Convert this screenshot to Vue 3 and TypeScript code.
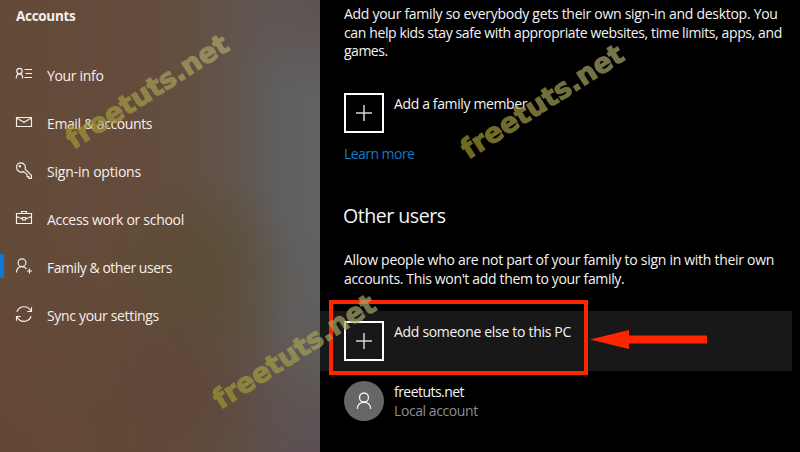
<script setup lang="ts">
interface NavItem {
  id: string
  label: string
  active?: boolean
}

const navItems: NavItem[] = [
  { id: 'info', label: 'Your info' },
  { id: 'email', label: 'Email & accounts' },
  { id: 'signin', label: 'Sign-in options' },
  { id: 'work', label: 'Access work or school' },
  { id: 'family', label: 'Family & other users', active: true },
  { id: 'sync', label: 'Sync your settings' },
]

const watermarks: string[] = ['wm-one', 'wm-two', 'wm-three']
</script>

<template>
  <div class="window">
    <aside class="sidebar">
      <h2 class="sidebar-title">Accounts</h2>
      <nav class="nav">
        <a v-for="item in navItems" :key="item.id" class="nav-item" :class="[item.id, { active: item.active }]">
          <svg class="nav-icon" width="18" height="18" viewBox="0 0 18 18">
            <g v-if="item.id === 'info'">
              <circle cx="4.500" cy="5" r="2.700" />
              <path d="M1.200 12.500c.1-2.900 1.300-4.700 3.300-4.700s3.200 1.800 3.300 4.700M9.500 3.500H17M10.500 7.500H17M9.500 11.500H17" />
            </g>
            <g v-else-if="item.id === 'email'">
              <path d="M1.500 3.500h15v9h-15zM1.500 4l7.500 4.300L16.500 4" />
            </g>
            <g v-else-if="item.id === 'signin'">
              <path d="M8.800 9.600C5 11.100 1.500 8.700 1.500 5.200c0-2.500 1.900-4.400 4.300-4.400 3.200 0 5.400 3 4.300 6.300l6.400 6.400v2.900h-2.600v-1.800h-1.800v-1.900z" />
              <circle cx="4.800" cy="4.200" r=".7" />
            </g>
            <g v-else-if="item.id === 'work'">
              <path d="M1.500 3.500h15v10h-15zM6.500 3.500v-2h5v2M1.500 6.500l6 2.500M10.500 9l6-2.500M7.500 7.500h3v2.500h-3z" />
            </g>
            <g v-else-if="item.id === 'family'">
              <circle cx="7" cy="4.700" r="3.900" />
              <path d="M1.500 14.500c.2-3.800 2.300-5.900 5.500-5.900 2 0 3.500.8 4.500 2.300M14.500 10.500v5M12 13h5" />
            </g>
            <g v-else>
              <path d="M1.800 5.800C3 2.800 5.700.7 9 .7c3.200 0 5.800 1.800 7.100 4.600M16.500 1.300v4.200h-4.200M16.200 10.200c-1.200 3-3.900 5.100-7.200 5.100-3.200 0-5.800-1.800-7.100-4.600M1.500 14.700v-4.200h4.200" />
            </g>
          </svg>
          <span class="nav-label">{{ item.label }}</span>
        </a>
      </nav>
    </aside>

    <main class="content">
      <p class="para family-text">
        <span class="l1">Add your family so everybody gets their own sign-in and desktop. You</span><br>
        <span class="l2">can help kids stay safe with appropriate websites, time limits, apps, and</span><br>
        <span class="l3">games.</span>
      </p>
      <div class="row">
        <span class="tile">
          <svg width="16" height="16" viewBox="0 0 16 16"><path d="M8 0v16M0 8h16" /></svg>
        </span>
        <span class="row-label t1">Add a family member</span>
      </div>
      <a class="link">Learn more</a>

      <h1 class="heading">Other users</h1>
      <p class="para other-text">
        <span class="l4">Allow people who are not part of your family to sign in with their own</span><br>
        <span class="l5">accounts. This won't add them to your family.</span>
      </p>
      <div class="row hovered">
        <span class="tile">
          <svg width="16" height="16" viewBox="0 0 16 16"><path d="M8 0v16M0 8h16" /></svg>
        </span>
        <span class="row-label t2">Add someone else to this PC</span>
        <span class="callout"></span>
        <svg class="arrow" width="117" height="20" viewBox="0 0 117 20">
          <path d="M0 9.500L39 0v5.500h78v8H39V19z" />
        </svg>
      </div>
      <div class="user">
        <span class="avatar">
          <svg width="16" height="18" viewBox="0 0 16 18">
            <circle cx="8" cy="5.500" r="4.500" />
            <path d="M1.300 17c.2-4 2.700-6.600 6.700-6.600s6.500 2.600 6.700 6.600" />
          </svg>
        </span>
        <div class="user-text">
          <span class="user-name">freetuts.net</span>
          <span class="user-kind">Local account</span>
        </div>
      </div>
    </main>

    <span v-for="mark in watermarks" :key="mark" class="watermark" :class="mark">freetuts.net</span>
  </div>
</template>

<style>
body {
  margin: 0;
  background: #000;
}
</style>

<style scoped>
.window {
  position: relative;
  display: flex;
  width: 800px;
  height: 452px;
  overflow: hidden;
  background: #000;
  color: #f4f4f4;
  font-family: "Open Sans", "Noto Sans", sans-serif;
  font-size: 14px;
  letter-spacing: -.3px;
}

.sidebar {
  box-sizing: border-box;
  width: 320px;
  height: 452px;
  flex: none;
  color: #f6f0ec;
  background:
    radial-gradient(ellipse 100px 100px at 205px 268px, rgba(86, 74, 42, .55), rgba(86, 74, 42, .4) 35%, rgba(86, 74, 42, 0)),
    radial-gradient(ellipse 120px 110px at 190px 385px, rgba(92, 66, 54, .5), rgba(92, 66, 54, 0)),
    radial-gradient(ellipse 110px 100px at 320px 0, rgba(92, 76, 70, .75), rgba(92, 76, 70, 0)),
    radial-gradient(ellipse 110px 100px at 320px 452px, rgba(90, 76, 82, .8), rgba(90, 76, 82, 0)),
    linear-gradient(rgba(94, 68, 44, 0) 50%, rgba(94, 68, 44, .3)),
    linear-gradient(90deg, #644a38 0, #644b3b 120px, #634f42 190px, #61564e 240px, #606062 285px, #616264 320px);
}

.sidebar-title {
  margin: 0;
  padding: 7px 0 0 16px;
  font-size: 13.500px;
  font-weight: 700;
  line-height: 19px;
}

.nav {
  padding-top: 25px;
}

.nav-item {
  box-sizing: border-box;
  display: flex;
  align-items: center;
  height: 48px;
  padding-left: 15px;
  gap: 14px;
}

.active {
  background: linear-gradient(#0b79d5, #0b79d5) 0 11px / 4px 24px no-repeat;
}

.nav-icon {
  flex: none;
  fill: none;
  stroke: #f6f0ec;
  stroke-width: 1.15;
}

.nav-label {
  padding-top: 2px;
  line-height: 20px;
  white-space: nowrap;
}

.info { letter-spacing: -.33px; }
.email { letter-spacing: -.4px; }
.signin { letter-spacing: -.19px; }
.work { letter-spacing: -.3px; }
.family { letter-spacing: -.46px; }
.sync { letter-spacing: -.33px; }

.content {
  flex: none;
  width: 480px;
  height: 452px;
}

.para {
  margin: 0;
  padding-left: 24px;
  line-height: 18.500px;
  white-space: nowrap;
}

.l1 { letter-spacing: -.284px; }
.l2 { letter-spacing: -.38px; }
.l3 { letter-spacing: -.5px; }
.l4 { letter-spacing: -.285px; }
.l5 { letter-spacing: -.34px; }
.t1 { letter-spacing: -.37px; }
.t2 { letter-spacing: -.31px; }

.family-text {
  padding-top: 5px;
}

.row {
  position: relative;
  box-sizing: border-box;
  display: flex;
  align-items: flex-start;
  width: 472px;
  height: 60px;
  margin-top: 22.500px;
  padding: 10px 0 0 24px;
  gap: 10px;
}

.tile {
  box-sizing: border-box;
  display: flex;
  align-items: center;
  justify-content: center;
  flex: none;
  width: 40px;
  height: 40px;
  border: 2px solid #fff;
}

.tile svg {
  fill: none;
  stroke: #d4d4d4;
  stroke-width: 1.500;
}

.row-label {
  padding-top: 1px;
  line-height: 20px;
  white-space: nowrap;
}

.link {
  display: block;
  padding: 1px 0 0 24px;
  line-height: 20px;
  color: #1878c6;
  letter-spacing: -.55px;
}

.heading {
  margin: 37px 0 0;
  padding-left: 23px;
  font-size: 19.600px;
  font-weight: 400;
  line-height: 30px;
  letter-spacing: -.5px;
}

.other-text {
  padding-top: 20px;
}

.hovered {
  margin-top: 22.500px;
  background: #181818;
}

.callout {
  position: absolute;
  left: 9px;
  top: -11px;
  box-sizing: border-box;
  width: 259px;
  height: 75px;
  border: 4px solid #fe2500;
}

.arrow {
  position: absolute;
  left: 270px;
  top: 19px;
  fill: #fe2500;
}

.user {
  display: flex;
  padding: 10px 0 0 24px;
  gap: 10px;
}

.avatar {
  display: flex;
  align-items: center;
  justify-content: center;
  width: 40px;
  height: 40px;
  border-radius: 50%;
  background: #666;
}

.avatar svg {
  fill: none;
  stroke: #f4f4f4;
  stroke-width: 1.3;
}

.user-text {
  display: flex;
  flex-direction: column;
  align-items: flex-start;
  padding-top: 1px;
  line-height: 19px;
}

.user-name {
  letter-spacing: -.54px;
}

.user-kind {
  color: #8e8e8e;
  letter-spacing: -.42px;
}

.watermark {
  position: absolute;
  font-family: "DejaVu Sans", Verdana, sans-serif;
  font-size: 27.500px;
  font-weight: 700;
  line-height: 32px;
  letter-spacing: 0;
  white-space: nowrap;
  color: transparent;
  -webkit-text-stroke: 1.2px transparent;
  background: linear-gradient(90deg, #9f9630, #a9a66e);
  background-clip: text;
  opacity: .7;
  transform: translate(-50%, -50%) rotate(-32.500deg);
}

.wm-one {
  left: 147px;
  top: 91px;
}

.wm-two {
  left: 542px;
  top: 101px;
}

.wm-three {
  left: 294px;
  top: 351px;
}
</style>
